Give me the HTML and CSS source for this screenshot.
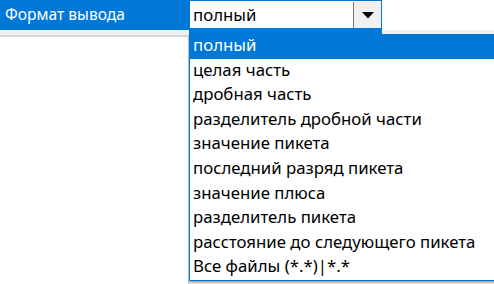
FILE: index.html
```html
<!DOCTYPE html>
<html lang="ru">
<head>
    <meta charset="UTF-8">
    <title>Формат вывода</title>
    <link rel="stylesheet" href="styles.css">
</head>
<body>
    <div class="grid">
        <div class="row">
            <div class="label">Формат вывода</div>
            <div class="combo">
                <span class="value">полный</span>
                <span class="arrow">
                    <svg width="12" height="7" viewBox="0 0 12 7"><polygon points="0,0 12,0 6,6.5" fill="#000"/></svg>
                </span>
            </div>
        </div>
        <div class="rest">
            <div class="strip"></div>
            <div class="body-cells">
                <div class="cell-left"></div>
                <div class="cell-right"></div>
            </div>
        </div>

        <ul class="dropdown">
            <li class="selected">полный</li>
            <li>целая часть</li>
            <li>дробная часть</li>
            <li>разделитель дробной части</li>
            <li>значение пикета</li>
            <li>последний разряд пикета</li>
            <li>значение плюса</li>
            <li>разделитель пикета</li>
            <li>расстояние до следующего пикета</li>
            <li>Все файлы (*.*)|*.*</li>
        </ul>
    </div>
</body>
</html>
```

FILE: styles.css
```css
body {
    margin: 0;
    background: #fff;
    font-family: 'Noto Sans', sans-serif;
    font-size: 16.8px;
    color: #000;
    overflow: hidden;
}
.grid {
    position: relative;
    width: 494px;
    height: 284px;
}
.row {
    display: flex;
    align-items: flex-start;
}
.label {
    width: 184px;
    height: 30px;
    line-height: 29px;
    padding-left: 5px;
    background: #0078d7;
    color: #fff;
    font-size: 15.6px;
}
.combo {
    width: 191px;
    height: 27px;
    border: 1px solid #0078d7;
    border-bottom: 6px solid #0078d7;
    background: #fff;
    display: flex;
    align-items: stretch;
    position: relative;
    z-index: 2;
}
.value {
    flex: 1;
    padding-left: 3px;
    line-height: 28px;
}
.arrow {
    width: 27px;
    margin-top: 1px;
    border-left: 1px solid #7a7a7a;
    background: #f0f0f0;
    display: flex;
    align-items: center;
    justify-content: center;
}
.rest {
    position: absolute;
    top: 30px;
    left: 0;
    right: 0;
    bottom: 0;
}
.strip {
    height: 5px;
    background: #f0f0f0;
    border-bottom: 2px solid #d6d6d6;
}
.body-cells {
    display: flex;
    height: 100%;
}
.cell-left {
    width: 188px;
    border-right: 1px solid #d6d6d6;
}
.dropdown {
    position: absolute;
    left: 189px;
    top: 34px;
    width: 320px;
    margin: 0;
    padding: 0;
    list-style: none;
    background: #fff;
    border: 1px solid #0078d7;
    border-top: none;
    box-shadow: 0 2px 2px rgba(0,0,0,0.35);
    z-index: 3;
}
.dropdown li {
    height: 24.6px;
    line-height: 22px;
    padding-left: 3px;
    white-space: nowrap;
}
.dropdown li.selected {
    background: #0078d7;
    color: #fff;
}
```
